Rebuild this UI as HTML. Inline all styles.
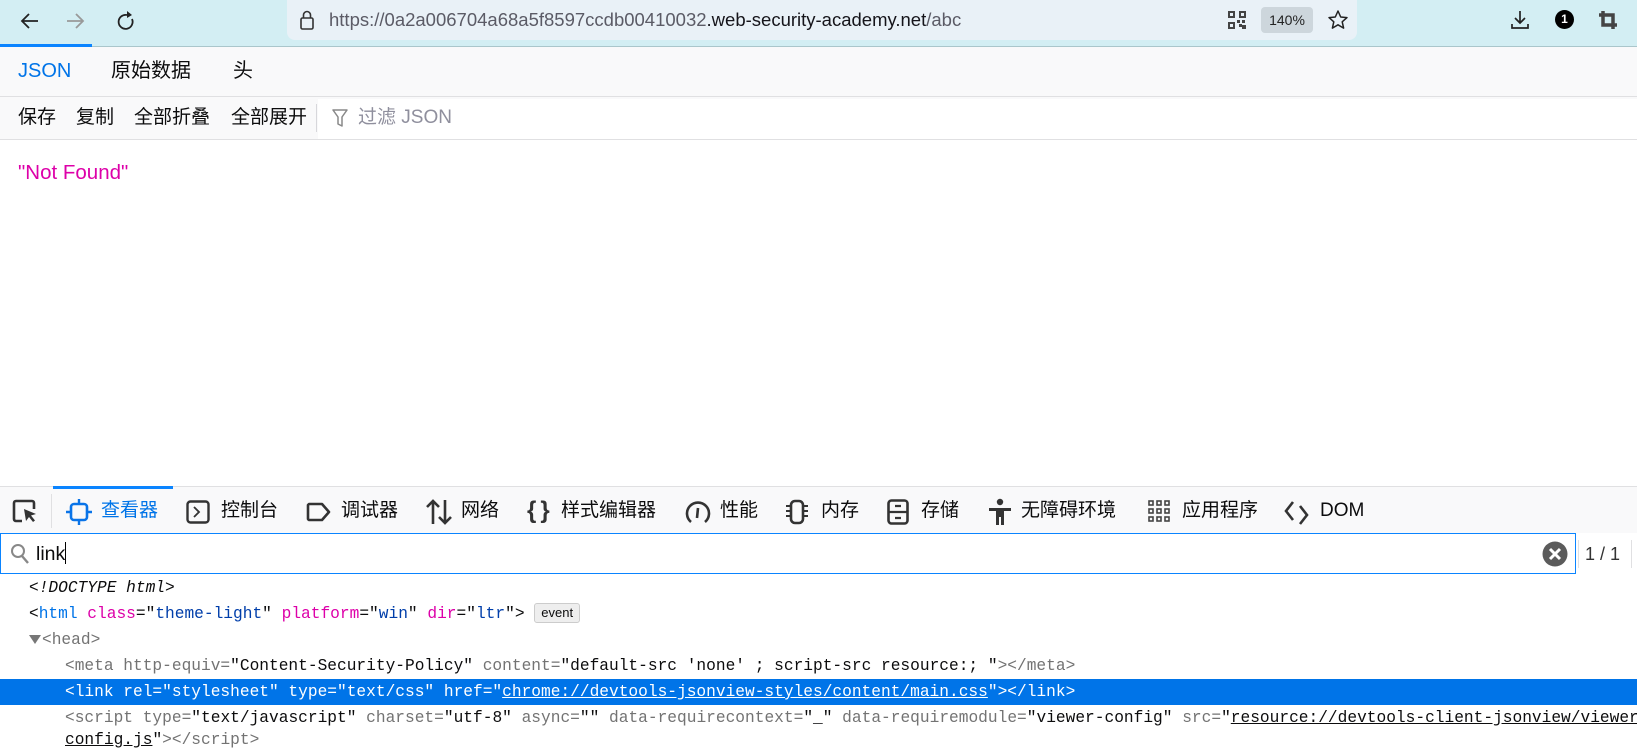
<!DOCTYPE html>
<html><head><meta charset="utf-8">
<style>
*{margin:0;padding:0;box-sizing:border-box}
body{width:1637px;height:754px;overflow:hidden;background:#fff;font-family:"Liberation Sans","Noto Sans CJK SC",sans-serif;position:relative;color:#0c0c0d}
.a{position:absolute}
.mono{font-family:"Liberation Mono","DejaVu Sans Mono",monospace;font-size:16.2px;white-space:pre}
.row{position:absolute;left:0;right:0;height:26px;line-height:26px}
.tg{color:#0074e8}.at{color:#dd00a9}.av{color:#003eaa}.gr{color:#737373}
.tab{position:absolute;top:498px;font-size:19px;line-height:26px;color:#0c0c0d}
.tb{position:absolute;top:105px;font-size:19px;line-height:26px;white-space:nowrap}
</style></head><body>
<!-- browser top bar -->
<div class="a" style="left:0;top:0;width:1637px;height:46px;background:#d3eef3"></div>
<div class="a" style="left:0;top:46px;width:1637px;height:1px;background:#aac6cb"></div>
<svg class="a" style="left:20px;top:10px" width="120" height="22" viewBox="0 0 120 22">
<path d="M18 11H3M9 4L2 11l7 7" stroke="#222" stroke-width="1.8" fill="none"/>
<path d="M47 11h15M56 4l7 7-7 7" stroke="#999" stroke-width="1.8" fill="none"/>
<path d="M107 5a7 7 0 1 0 5 4" stroke="#222" stroke-width="1.8" fill="none"/><path d="M107 1l5 4-5 3z" fill="#222"/>
</svg>
<div class="a" style="left:287px;top:0;width:1070px;height:40px;background:#e9f1f7;border-radius:0 0 8px 8px"></div>
<svg class="a" style="left:299px;top:9px" width="16" height="22"><rect x="2" y="9" width="12" height="11" rx="1.5" fill="none" stroke="#333" stroke-width="1.6"/><path d="M4.5 9V6a3.5 3.5 0 0 1 7 0v3" fill="none" stroke="#333" stroke-width="1.6"/></svg>
<div class="a" style="left:329px;top:8px;font-size:18.5px;line-height:24px;color:#5b5b66;white-space:nowrap">https://0a2a006704a68a5f8597ccdb00410032<span style="color:#15141a">.web-security-academy.net</span>/abc</div>
<svg class="a" style="left:1228px;top:11px" width="18" height="18"><g fill="#444"><rect x="0" y="0" width="7" height="7"/><rect x="11" y="0" width="7" height="7"/><rect x="0" y="11" width="7" height="7"/><rect x="9" y="9" width="3" height="3"/><rect x="14" y="14" width="4" height="4"/><rect x="11" y="13" width="3" height="3"/><rect x="14" y="9" width="3" height="3"/></g><g fill="#e9f1f7"><rect x="2" y="2" width="3" height="3"/><rect x="13" y="2" width="3" height="3"/><rect x="2" y="13" width="3" height="3"/></g></svg>
<div class="a" style="left:1261px;top:7px;width:52px;height:26px;background:#cdd6dc;border-radius:4px;font-size:14px;line-height:26px;text-align:center;color:#222">140%</div>
<svg class="a" style="left:1327px;top:9px" width="22" height="22"><path d="M11 2l2.7 6 6.3.6-4.8 4.2 1.4 6.3L11 15.8 5.4 19.1l1.4-6.3L2 8.6l6.3-.6z" fill="none" stroke="#222" stroke-width="1.5" stroke-linejoin="round"/></svg>
<svg class="a" style="left:1509px;top:9px" width="22" height="22"><path d="M11 2v12M6 9l5 5 5-5M3 15v4h16v-4" fill="none" stroke="#222" stroke-width="1.7"/></svg>
<div class="a" style="left:1555px;top:10px;width:19px;height:19px;border-radius:50%;background:#000;color:#fff;font-size:12px;font-weight:bold;text-align:center;line-height:19px">1</div>
<svg class="a" style="left:1598px;top:10px" width="20" height="20"><path d="M5 1v14h14M1 5h14v14" fill="none" stroke="#444" stroke-width="3.5"/></svg>

<!-- json viewer tabs -->
<div class="a" style="left:0;top:47px;width:1637px;height:50px;background:#f9f9fa;border-bottom:1px solid #e0e0e2"></div>
<div class="a" style="left:0;top:44px;width:92px;height:3px;background:#0a84ff"></div>
<div class="a" style="left:18px;top:57px;font-size:20px;line-height:28px;color:#0074e8">JSON</div>
<div class="a" style="left:111px;top:57px;font-size:20px;line-height:28px">原始数据</div>
<div class="a" style="left:233px;top:57px;font-size:20px;line-height:28px">头</div>
<div class="a" style="left:0;top:97px;width:1637px;height:43px;background:#f9f9fa;border-bottom:1px solid #e0e0e2"></div>
<div class="a" style="left:318px;top:99px;width:1319px;height:40px;background:#fff"></div>
<div class="a" style="left:316px;top:104px;width:1px;height:28px;background:#d7d7db"></div>
<div class="tb" style="left:18px">保存</div>
<div class="tb" style="left:76px">复制</div>
<div class="tb" style="left:134px">全部折叠</div>
<div class="tb" style="left:231px">全部展开</div>
<svg class="a" style="left:332px;top:109px" width="16" height="19"><path d="M1 1h14l-5 7v9l-4-2V8z" fill="none" stroke="#888" stroke-width="1.5" stroke-linejoin="round"/></svg>
<div class="tb" style="left:358px;color:#8f8f9d">过滤 JSON</div>
<div class="a" style="left:18px;top:159px;font-size:20.5px;line-height:28px;color:#dd00a9">"Not Found"</div>

<!-- devtools -->
<div class="a" style="left:0;top:486px;width:1637px;height:47px;background:#f9f9fa;border-top:1px solid #e0e0e2"></div>
<div class="a" style="left:53px;top:486px;width:120px;height:3px;background:#0a84ff"></div>
<div class="a" style="left:51px;top:494px;width:1px;height:34px;background:#e0e0e2"></div>
<svg class="a" style="left:12px;top:499px" width="28" height="26"><path d="M10 22H4a2 2 0 0 1-2-2V4a2 2 0 0 1 2-2h16a2 2 0 0 1 2 2v6" fill="none" stroke="#333" stroke-width="2.6"/><path d="M12 10l12 5-5 1.5 4 5-2 1.5-4-5-3 4z" fill="#333"/></svg>
<svg class="a" style="left:66px;top:499px" width="26" height="26"><rect x="5" y="5" width="16" height="16" rx="3" fill="none" stroke="#0a74e8" stroke-width="2.6"/><path d="M13 0v5M13 21v5M0 13h5M21 13h5" stroke="#0a74e8" stroke-width="2.4"/></svg>
<div class="tab" style="left:101px;color:#0074e8">查看器</div>
<svg class="a" style="left:186px;top:500px" width="24" height="24"><rect x="1.5" y="1.5" width="21" height="21" rx="3" fill="none" stroke="#333" stroke-width="2.4"/><path d="M8 7l5 5-5 5" fill="none" stroke="#333" stroke-width="1.8"/></svg>
<div class="tab" style="left:221px">控制台</div>
<svg class="a" style="left:306px;top:502px" width="26" height="20"><path d="M3 2h13l7 8-7 8H3a2 2 0 0 1-1-1V3z" fill="none" stroke="#333" stroke-width="2.6" stroke-linejoin="round"/></svg>
<div class="tab" style="left:341px">调试器</div>
<svg class="a" style="left:426px;top:498px" width="26" height="28"><path d="M7 26V3M1 9l6-6 6 6M19 2v23M13 19l6 6 6-6" fill="none" stroke="#333" stroke-width="2.6"/></svg>
<div class="tab" style="left:461px">网络</div>
<div class="a" style="left:527px;top:497px;font-size:24px;line-height:28px;font-weight:bold;color:#333;letter-spacing:4px">{}</div>
<div class="tab" style="left:561px">样式编辑器</div>
<svg class="a" style="left:685px;top:499px" width="26" height="26"><path d="M6 23A11 11 0 1 1 20 23" fill="none" stroke="#333" stroke-width="2.6"/><path d="M13 9l-1 10" stroke="#333" stroke-width="2.6"/></svg>
<div class="tab" style="left:720px">性能</div>
<svg class="a" style="left:784px;top:499px" width="26" height="26"><rect x="7" y="2" width="12" height="22" rx="4" fill="none" stroke="#333" stroke-width="2.6"/><path d="M2 7h5M2 12h5M2 17h5M19 7h5M19 12h5M19 17h5" stroke="#333" stroke-width="2"/></svg>
<div class="tab" style="left:821px">内存</div>
<svg class="a" style="left:887px;top:499px" width="22" height="26"><rect x="1.5" y="1.5" width="19" height="23" rx="3" fill="none" stroke="#333" stroke-width="2.6"/><path d="M1 13h20M8 7h6M8 19h6" stroke="#333" stroke-width="2.2"/></svg>
<div class="tab" style="left:921px">存储</div>
<svg class="a" style="left:988px;top:498px" width="24" height="28"><circle cx="12" cy="4" r="3.2" fill="#333"/><path d="M1 10h22v3h-7v14h-3v-8h-2v8H8V13H1z" fill="#333"/></svg>
<div class="tab" style="left:1021px">无障碍环境</div>
<svg class="a" style="left:1148px;top:500px" width="22" height="22"><g fill="none" stroke="#444" stroke-width="1.6"><rect x="1" y="1" width="4" height="4"/><rect x="9" y="1" width="4" height="4"/><rect x="17" y="1" width="4" height="4"/><rect x="1" y="9" width="4" height="4"/><rect x="9" y="9" width="4" height="4"/><rect x="17" y="9" width="4" height="4"/><rect x="1" y="17" width="4" height="4"/><rect x="9" y="17" width="4" height="4"/><rect x="17" y="17" width="4" height="4"/></g></svg>
<div class="tab" style="left:1182px">应用程序</div>
<svg class="a" style="left:1284px;top:499px" width="28" height="26"><path d="M9 3L2 12l7 9M16 7l7 9-7 9" fill="none" stroke="#333" stroke-width="2.6"/></svg>
<div class="tab" style="left:1320px">DOM</div>

<div class="a" style="left:0;top:533px;width:1576px;height:41px;border:1px solid #0a84ff;background:#fff"></div>
<svg class="a" style="left:10px;top:543px" width="20" height="22"><circle cx="8" cy="8" r="6" fill="none" stroke="#888" stroke-width="2"/><path d="M12 13l6 7" stroke="#888" stroke-width="2.4"/></svg>
<div class="a" style="left:36px;top:541px;font-size:19.5px;line-height:26px">link<span style="display:inline-block;width:1px;height:22px;background:#000;vertical-align:-4px"></span></div>
<svg class="a" style="left:1542px;top:541px" width="26" height="26"><circle cx="13" cy="13" r="12.5" fill="#5b5b5b"/><path d="M8 8l10 10M18 8L8 18" stroke="#fff" stroke-width="3"/></svg>
<div class="a" style="left:1578px;top:540px;width:1px;height:28px;background:#e0e0e2"></div>
<div class="a" style="left:1631px;top:540px;width:1px;height:28px;background:#e0e0e2"></div>
<div class="a" style="left:1585px;top:542px;font-size:18px;line-height:24px;color:#333">1 / 1</div>

<div class="row mono" style="top:575px;padding-left:29px"><i style="color:#0c0c0d">&lt;!DOCTYPE html&gt;</i></div>
<div class="row mono" style="top:601px;padding-left:29px">&lt;<span class="tg">html</span> <span class="at">class</span>="<span class="av">theme-light</span>" <span class="at">platform</span>="<span class="av">win</span>" <span class="at">dir</span>="<span class="av">ltr</span>"&gt; <span style="display:inline-block;font-size:13px;line-height:18px;padding:0 6px;border:1px solid #ccc;border-radius:3px;background:#eee;vertical-align:1px;font-family:'Liberation Sans',sans-serif">event</span></div>
<div class="row mono gr" style="top:627px;padding-left:29px"><svg width="13" height="10" style="vertical-align:0"><path d="M0 1h12L6 10z" fill="#777"/></svg>&lt;head&gt;</div>
<div class="row mono" style="top:653px;padding-left:65px"><span class="gr">&lt;meta http-equiv=</span>"Content-Security-Policy"<span class="gr"> content=</span>"default-src 'none' ; script-src resource:; "<span class="gr">&gt;&lt;/meta&gt;</span></div>
<div class="row mono" style="top:679px;padding-left:65px;background:#0074e8;color:#fff">&lt;link rel="stylesheet" type="text/css" href="<u>chrome://devtools-jsonview-styles/content/main.css</u>"&gt;&lt;/link&gt;</div>
<div class="row mono" style="top:705px;padding-left:65px;overflow:hidden"><span class="gr">&lt;script type=</span>"text/javascript"<span class="gr"> charset=</span>"utf-8"<span class="gr"> async=</span>""<span class="gr"> data-requirecontext=</span>"_"<span class="gr"> data-requiremodule=</span>"viewer-config"<span class="gr"> src=</span>"<u>resource://devtools-client-jsonview/viewer-</u></div>
<div class="row mono" style="top:727px;padding-left:65px"><u>config.js</u>"<span class="gr">&gt;&lt;/script&gt;</span></div>
</body></html>
